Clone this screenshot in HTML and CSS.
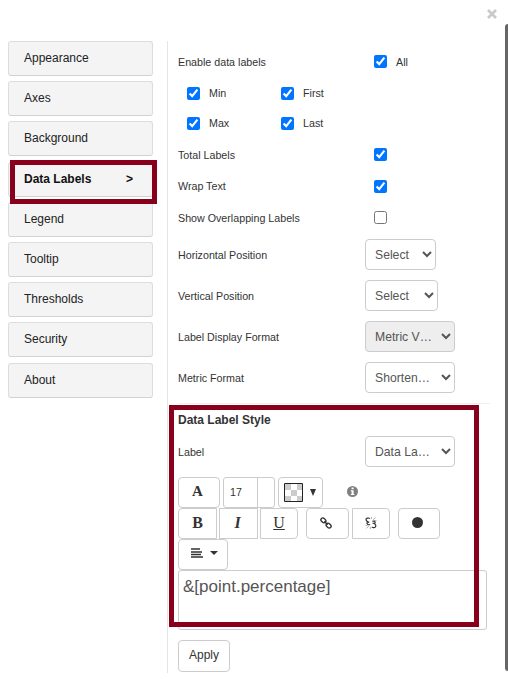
FILE: index.html
```html
<!DOCTYPE html>
<html lang="en">
<head>
<meta charset="utf-8">
<title>Data Labels</title>
<link rel="stylesheet" href="styles.css">
</head>
<body>
<div class="dialog">
  <header class="top">
    <button class="close" aria-label="Close"><svg width="10" height="10" viewBox="0 0 10 10"><path d="M1 1l8 8M9 1L1 9" stroke="#c9c9c9" stroke-width="2.7"/></svg></button>
  </header>
  <div class="body">
    <nav class="menu">
      <a class="item">Appearance</a>
      <a class="item">Axes</a>
      <a class="item">Background</a>
      <a class="item active"><span>Data Labels</span><span>&gt;</span></a>
      <a class="item">Legend</a>
      <a class="item">Tooltip</a>
      <a class="item">Thresholds</a>
      <a class="item">Security</a>
      <a class="item">About</a>
    </nav>
    <main class="panel">
      <div class="row"><span class="name">Enable data labels</span><label class="check main-check"><input type="checkbox" checked>All</label></div>
      <div class="pair"><label class="check"><input type="checkbox" checked>Min</label><label class="check"><input type="checkbox" checked>First</label></div>
      <div class="pair"><label class="check"><input type="checkbox" checked>Max</label><label class="check"><input type="checkbox" checked>Last</label></div>
      <div class="row total"><span class="name">Total Labels</span><label class="check main-check"><input type="checkbox" checked></label></div>
      <div class="row wrap"><span class="name">Wrap Text</span><label class="check main-check"><input type="checkbox" checked></label></div>
      <div class="row"><span class="name">Show Overlapping Labels</span><label class="check main-check"><input type="checkbox"></label></div>
      <div class="fields">
        <div class="row"><span class="name">Horizontal Position</span><select class="select w71"><option>Select</option></select></div>
        <div class="row"><span class="name">Vertical Position</span><select class="select w73"><option>Select</option></select></div>
        <div class="row"><span class="name">Label Display Format</span><select class="select w90" disabled><option>Metric V…</option></select></div>
        <div class="row"><span class="name">Metric Format</span><select class="select w90"><option>Shorten…</option></select></div>
      </div>
      <section class="style">
        <h2>Data Label Style</h2>
        <div class="row"><span class="name">Label</span><select class="select w90"><option>Data La…</option></select></div>
        <div class="tools first">
          <button class="tool font">A</button>
          <div class="size"><span>17</span><i></i></div>
          <button class="tool color">
            <svg width="19" height="19" viewBox="0 0 19 19"><path fill="#fff" d="M0 0h19v19H0z"/><path fill="#ccc" d="M1 1h6v6H1zM13 1h5v6h-5zM7 7h6v6H7zM1 13h6v5H1zM13 13h5v5h-5z"/><path d="M.5.5h18v18H.5z" fill="none" stroke="#222"/></svg>
            <svg width="6" height="7" viewBox="0 0 6 7"><path d="M0 0h6L3 7z" fill="#333"/></svg>
          </button>
          <svg class="info" width="11" height="11" viewBox="0 0 11 11"><circle cx="5.5" cy="5.5" r="5.5" fill="#808080"/><path d="M4.6 1.5h2v1.7h-2zM3.8 4.3h2.8v3.6h.7v1.2H3.8V7.9h.8V5.5h-.8z" fill="#fff"/></svg>
        </div>
        <div class="tools second">
          <button class="tool bold">B</button>
          <button class="tool italic">I</button>
          <button class="tool under">U</button>
          <button class="tool link"><svg width="12" height="12" viewBox="0 0 12 12" fill="none" stroke="#333" stroke-width="1.4"><rect x="-2.7" y="-1.9" width="5.4" height="3.8" rx="1.9" transform="translate(3.4 3.4) rotate(45)"/><rect x="-2.7" y="-1.9" width="5.4" height="3.8" rx="1.9" transform="translate(8.6 8.6) rotate(45)"/><path d="M4.3 4.3l3.4 3.4"/></svg></button>
          <button class="tool unlink"><svg width="12" height="12" viewBox="0 0 12 12" fill="none" stroke="#333" stroke-width="1.2"><path d="M5 1.6C3.4.4 1 1.2 1 2.8c0 1.5 1.6 1.9 3.2 2.7M2.4 5c-1.2 1.5.3 3.4 2.8 2.5M7.3 4.2c2-.6 3.6.8 2.5 2.2M7.6 6.2c2 .3 3.5 1.3 3.2 2.9-.3 1.6-2.6 2-4 .8"/><path stroke-width=".6" stroke="#777" d="M6.5 0v1.8M8 2.8L10.5.5M9 3.6h2.5M3.8 9L1.3 11.5M.5 8.4h2M5.4 10v2"/></svg></button>
          <button class="tool dot"><svg width="11" height="11" viewBox="0 0 11 11"><circle cx="5.5" cy="5.5" r="5.5" fill="#333"/></svg></button>
        </div>
        <div class="tools">
          <button class="tool align"><svg width="12" height="10" viewBox="0 0 12 10"><path d="M0 1h9M0 4h11M0 6.5h10M0 9h12" stroke="#333" stroke-width="1.7"/></svg><svg width="8" height="4" viewBox="0 0 8 4"><path d="M0 0h8L4 4z" fill="#333"/></svg></button>
        </div>
        <div class="editor">&amp;[point.percentage]</div>
        <div class="frame frame-style"></div>
      </section>
      <button class="apply">Apply</button>
    </main>
  </div>
  <div class="frame frame-menu"></div>
  <div class="scroll"></div>
</div>
</body>
</html>
```

FILE: styles.css
```css
* { box-sizing: border-box; }
body {
  margin: 0;
  background: #fff;
  color: #333;
  font-family: "Liberation Sans", Arial, sans-serif;
  font-size: 10.7px;
}
button { background: #fff; color: #333; font: inherit; padding: 0; }
svg { display: block; }
.dialog { position: relative; height: 679px; overflow: hidden; }
.top { display: flex; justify-content: flex-end; height: 41px; padding: 9px 11px 0 0; }
.close { border: 0; height: 10px; background: none; }
.body { display: flex; }

.menu { display: flex; flex-direction: column; gap: 5.2px; width: 145px; margin-left: 8px; }
.item {
  display: flex;
  justify-content: space-between;
  height: 35px;
  padding: 0 19px 0 15px;
  border: 1px solid #ddd;
  border-bottom-color: #d2d2d2;
  border-radius: 3px;
  background: #f4f4f4;
  color: #222;
  font-size: 12px;
  line-height: 32px;
}
.active { font-weight: bold; color: #111; }

.panel { width: 324px; height: 632px; margin-left: 14px; padding: 5px 0 0 10px; border-left: 1px solid #e5e5e5; }
.row { display: flex; align-items: center; height: 31px; }
.name { width: 187px; }
.check { display: flex; align-items: center; }
.check input { width: 13px; height: 13px; margin: 0 9px 0 0; }
.main-check { margin-left: 9px; }
.pair { display: grid; grid-template-columns: 94px 94px; height: 30px; padding-left: 9px; }
.row + .pair { margin-top: 1px; }
.total { margin-top: 1px; }
.wrap { height: 32px; }

.fields { display: flex; flex-direction: column; gap: 10px; padding: 6px 0 10px; width: 312px; border-bottom: 1px solid #eee; }
.select {
  height: 31px;
  padding: 0 0 0 5px;
  border: 1px solid #ccc;
  border-radius: 4px;
  background-color: #fff;
  color: #555;
  font: 12.2px "Liberation Sans", Arial, sans-serif;
}
.select:disabled { background-color: #eee; color: #555; opacity: 1; }
.w71 { width: 71px; }
.w73 { width: 73px; }
.w90 { width: 90px; }

.style { position: relative; }
h2 { margin: 0; height: 32px; font-size: 12px; line-height: 32px; }
.tools { display: flex; height: 31px; }
.first { margin-top: 10px; }
.tool { display: flex; align-items: center; justify-content: center; height: 31px; border: 1px solid #ccc; border-radius: 4px; font-family: "Liberation Serif", serif; font-size: 16px; }
.font { width: 42px; margin-right: 3px; padding: 0 3px 2px 0; font-weight: bold; font-size: 15px; }
.size { display: flex; width: 52px; margin-right: 3px; border: 1px solid #ccc; border-radius: 3px; line-height: 29px; }
.size span { width: 34px; padding-left: 6px; border-right: 1px solid #ccc; }
.color { width: 45px; gap: 7px; padding-right: 2px; }
.info { margin: 9px 0 0 24px; }
.bold { width: 39px; margin-right: 2px; padding-bottom: 2px; border-radius: 4px 0 0 4px; font-weight: bold; }
.italic { width: 39px; margin-right: 2px; padding: 0 2px 2px 0; border-radius: 0; font-style: italic; font-weight: bold; }
.under { width: 38px; margin-right: 8px; padding-bottom: 2px; border-radius: 0 4px 4px 0; text-decoration: underline; }
.link { width: 43px; margin-right: 3px; padding: 0 3px 2px 0; }
.unlink { width: 38px; margin-right: 8px; padding-bottom: 2px; border-radius: 0 4px 4px 0; }
.dot { width: 42px; padding: 0 3px 2px 0; }
.align { width: 50px; gap: 7px; padding: 0 0 3px 2px; }
.editor { width: 309px; height: 60px; padding: 0 4px; border: 1px solid #ccc; border-radius: 3px; color: #555; font-size: 17px; line-height: 32px; }
.apply { width: 52px; height: 32px; margin-top: 10px; padding-bottom: 2px; border: 1px solid #ccc; border-radius: 4px; font-size: 12px; }

.frame { position: absolute; border: 5px solid #88001b; }
.frame-menu { left: 10px; top: 160px; width: 147px; height: 44px; }
.frame-style { left: -9px; top: 1px; width: 310px; height: 222px; }
.scroll { position: absolute; right: -3px; top: 24px; width: 6px; height: 647px; border-radius: 3px; background: #666; }
```
